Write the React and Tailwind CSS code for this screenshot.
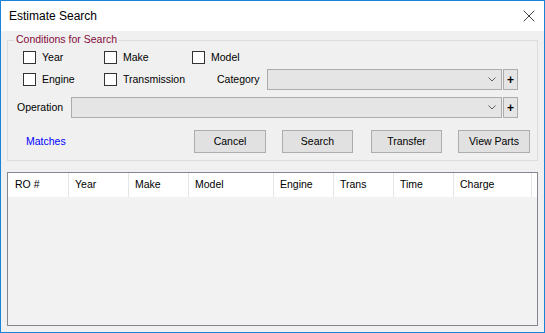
import { X } from 'lucide-react';

function Check({ label, width }) {
  return (
    <div className="flex items-center" style={{ width }}>
      <div className="h-[13px] w-[13px] border border-[#333333] bg-white" />
      <span className="ml-[6px]">{label}</span>
    </div>
  );
}

function Combo({ width }) {
  return (
    <div className="flex h-[21px] items-center">
      <div
        className="flex h-[21px] items-center justify-end border border-[#acacac] bg-[#e5e5e5] pr-[5px]"
        style={{ width }}
      >
        <svg width="8" height="5" viewBox="0 0 8 5">
          <path d="M0.5 0.5 L4 4 L7.5 0.5" fill="none" stroke="#606060" strokeWidth="1" />
        </svg>
      </div>
      <div className="ml-[1px] flex h-[21px] w-[15px] items-center justify-center border border-[#acacac] bg-[#e5e5e5] text-[12px] font-bold leading-none">
        +
      </div>
    </div>
  );
}

function Btn({ children, className = '' }) {
  return (
    <div
      className={
        'flex h-[23px] items-center justify-center border border-[#adadad] bg-[#e1e1e1] ' + className
      }
    >
      {children}
    </div>
  );
}

const columns = [
  { name: 'RO #', w: 'w-[61px] pl-[7px]' },
  { name: 'Year', w: 'w-[60px] pl-[6px]' },
  { name: 'Make', w: 'w-[60px] pl-[6px]' },
  { name: 'Model', w: 'w-[85px] pl-[6px]' },
  { name: 'Engine', w: 'w-[60px] pl-[6px]' },
  { name: 'Trans', w: 'w-[60px] pl-[6px]' },
  { name: 'Time', w: 'w-[60px] pl-[6px]' },
  { name: 'Charge', w: 'w-[78px] pl-[6px]' },
];

export default function App() {
  return (
    <div className="flex h-[333px] w-[545px] flex-col border border-[#1883d7] bg-[#f0f0f0] font-['Liberation_Sans',Arial,sans-serif] text-[10.5px] text-black">
      {/* title bar */}
      <div className="flex h-[30px] shrink-0 items-center justify-between bg-white pl-[8px] pr-[5px]">
        <span className="text-[12px]">Estimate Search</span>
        <X size={20} strokeWidth={0.9} />
      </div>

      <div className="flex flex-col px-[6px]">
        {/* conditions */}
        <div className="relative mt-[9px] h-[121px] border border-[#dcdcdc]">
          <span className="absolute left-[6px] top-[-8px] bg-[#f0f0f0] px-[2px] leading-[13px] text-[#850a3a]">
            Conditions for Search
          </span>

          <div className="ml-[15px] mt-[10px] flex h-[13px] items-center">
            <Check label="Year" width="81px" />
            <Check label="Make" width="88px" />
            <Check label="Model" width="80px" />
          </div>

          <div className="ml-[15px] mt-[5px] flex h-[21px] items-center">
            <Check label="Engine" width="81px" />
            <Check label="Transmission" width="113px" />
            <span className="w-[50px]">Category</span>
            <Combo width="235px" />
          </div>

          <div className="ml-[9px] mt-[7px] flex h-[21px] items-center">
            <span className="w-[54px]">Operation</span>
            <Combo width="431px" />
          </div>

          <div className="mt-[12px] flex h-[23px] items-center">
            <span className="ml-[18px] w-[168px] text-[#0000ff]">Matches</span>
            <Btn className="w-[72px]">Cancel</Btn>
            <Btn className="ml-[16px] w-[71px]">Search</Btn>
            <Btn className="ml-[18px] w-[71px]">Transfer</Btn>
            <Btn className="ml-[16px] w-[72px]">View Parts</Btn>
          </div>
        </div>

        {/* results list */}
        <div className="mt-[11px] h-[154px] border border-[#828790] bg-[#f2f2f2]">
          <div className="flex h-[24px] bg-white">
            {columns.map((c) => (
              <div key={c.name} className={'flex items-center border-r border-[#e5e5e5] ' + c.w}>
                {c.name}
              </div>
            ))}
            <div className="flex-1" />
          </div>
        </div>
      </div>
    </div>
  );
}
